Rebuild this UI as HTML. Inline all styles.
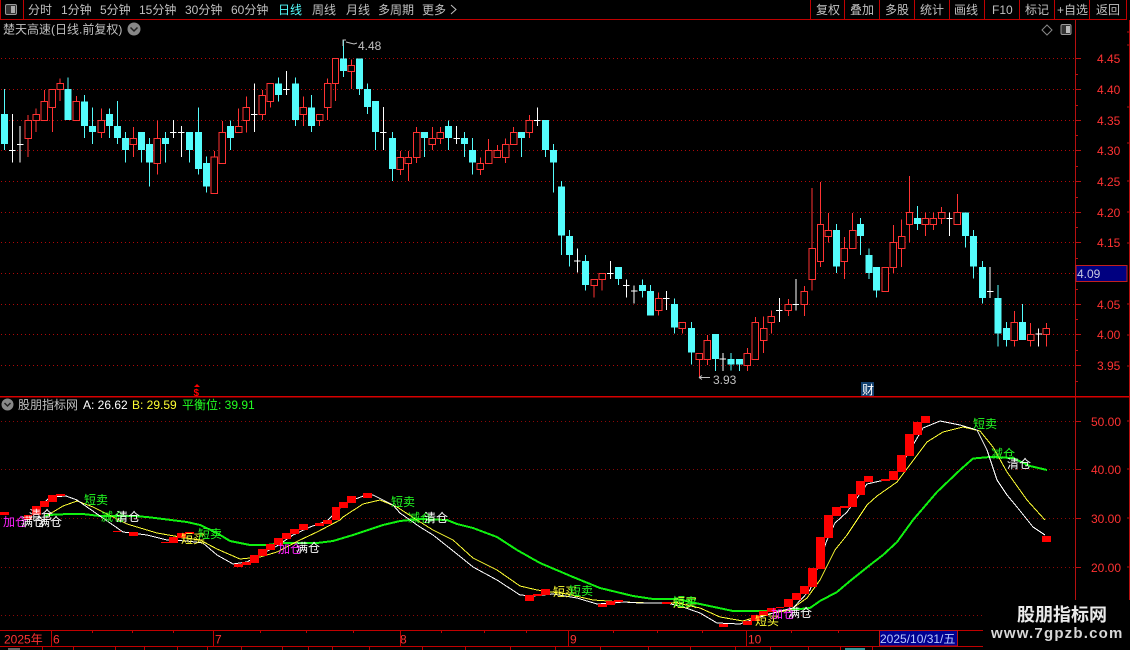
<!DOCTYPE html>
<html>
<head>
<meta charset="utf-8">
<style>
html,body{margin:0;padding:0;background:#000;width:1130px;height:650px;overflow:hidden}
svg{display:block;font-family:"Liberation Sans","WenQuanYi Zen Hei","Noto Sans CJK SC",sans-serif;font-size:12px}
.g{fill:#c0c0c0}
.r{fill:#ff3232}
.c{vector-effect:non-scaling-stroke}
.lg{fill:#22ff22}.lw{fill:#ffffff}.ly{fill:#ffff33}.lm{fill:#ff22ff}
</style>
</head>
<body>
<svg width="1130" height="650" viewBox="0 0 1130 650" xmlns="http://www.w3.org/2000/svg">
<rect width="1130" height="650" fill="#000"/>

<!-- grid -->
<path shape-rendering="crispEdges" stroke="#b00808" stroke-width="1" stroke-dasharray="1 3" fill="none" d="M1 58.5H1075M1 89.5H1075M1 120.5H1075M1 150.5H1075M1 181.5H1075M1 212.5H1075M1 242.5H1075M1 273.5H1075M1 304.5H1075M1 334.5H1075M1 365.5H1075"/>
<path shape-rendering="crispEdges" stroke="#8c0808" stroke-width="1" stroke-dasharray="1 3" fill="none" d="M1 421.5H1075M1 469.5H1075M1 518.5H1075M1 567.5H1075M1 615.5H1075"/>

<!-- toolbar -->
<path shape-rendering="crispEdges" stroke="#c00000" fill="none" d="M0 19.5H1127M23.5 0V19M.5 0V19M810.5 0V19M844.5 0V19M879.5 0V19M914.5 0V19M949.5 0V19M984.5 0V19M1019.5 0V19M1054.5 0V19M1089.5 0V19M1126.5 0V19"/>
<rect x="5.5" y="4.5" width="11" height="10" rx="1.5" fill="#333" stroke="#999"/>
<rect x="11" y="6" width="4" height="7" fill="#aaa"/>
<g class="g">
<text x="28" y="14">分时</text>
<text x="61" y="14">1分钟</text>
<text x="100" y="14">5分钟</text>
<text x="139" y="14">15分钟</text>
<text x="185" y="14">30分钟</text>
<text x="231" y="14">60分钟</text>
<text x="278" y="14" style="fill:#54fcfc">日线</text>
<text x="312" y="14">周线</text>
<text x="346" y="14">月线</text>
<text x="378" y="14">多周期</text>
<text x="422" y="14">更多</text>
<text x="816" y="14">复权</text>
<text x="850" y="14">叠加</text>
<text x="885" y="14">多股</text>
<text x="920" y="14">统计</text>
<text x="954" y="14">画线</text>
<text x="992" y="14">F10</text>
<text x="1025" y="14">标记</text>
<text x="1057" y="14">+自选</text>
<text x="1096" y="14">返回</text>
</g>
<path d="M451 5l5 4.5-5 4.5" fill="none" stroke="#c0c0c0"/>

<!-- price title -->
<text class="g" x="3" y="33.500">楚天高速(日线.前复权)</text>
<circle cx="134" cy="29" r="6.500" fill="#888"/>
<path d="M130.500 27.500l3.500 3.500 3.500-3.500" fill="none" stroke="#222" stroke-width="1.500"/>
<path d="M1047 25l5 5-5 5-5-5z" fill="none" stroke="#888"/>
<rect x="1061" y="24.500" width="10" height="10" rx="1.500" fill="#333" stroke="#999"/>
<rect x="1066" y="26" width="4" height="7" fill="#bbb"/>

<!-- candles part 1 -->
<g transform="scale(.36036,.33333)" shape-rendering="crispEdges">
<path class="c" fill="none" stroke="#54fcfc" stroke-width="1" d="M12 267V450M189 232V360M234 285V414M256 322V432M304 325V414M326 303V432M348 396V488M392 396V488M415 414V560M459 396V488M526 396V488M551 322V524M573 470V578M640 361V450M773 232V304M820 232V378M865 285V396M953 120V231M997 175V285M1020 250V342M1042 303V450M1089 396V543M1178 396V471M1244 361V450M1289 396V471M1311 414V524M1447 396V471M1514 360V471M1536 432V578M1558 543V765"/>
<path class="c" fill="none" stroke="#54fcfc" stroke-width="7" d="M12 342V432M189 267V360M234 304V378M256 378V396M304 342V378M326 378V414M348 414V450M392 396V450M415 432V488M459 414V432M526 396V450M551 396V507M573 489V560M640 378V414M773 250V285M820 250V360M865 322V378M953 175V213M997 175V267M1020 267V321M1042 303V396M1089 414V507M1178 396V414M1244 378V414M1289 414V432M1311 450V488M1447 396V414M1514 360V450M1536 450V488M1558 560V707"/>
<path class="c" fill="none" stroke="#ff3232" stroke-width="1" d="M78 345V471M100 325V396M123 270V361M145 268V396M167 235V303M212 288V361M281 325V414M370 381V471M437 361V524M595 453V580M617 363V490M662 325V397M684 289V397M728 270V360M750 250V322M842 289V378M887 343V378M909 235V360M931 175V303M975 178V267M1111 453V525M1133 453V543M1156 381V489M1200 381V450M1222 381V432M1333 472V525M1356 417V490M1380 435V472M1403 415V489M1425 381V433M1469 345V414"/>
<path class="c" fill="#000" stroke="#ff3232" stroke-width="1" d="M69 361h18V415h-18ZM91 343h18V361h-18ZM114 304h18V361h-18ZM136 268h18V322h-18ZM158 250h18V268h-18ZM203 304h18V361h-18ZM272 361h18V398h-18ZM361 415h18V433h-18ZM428 415h18V490h-18ZM586 471h18V580h-18ZM608 397h18V490h-18ZM653 379h18V397h-18ZM675 322h18V361h-18ZM719 286h18V343h-18ZM741 250h18V304h-18ZM833 322h18V343h-18ZM878 343h18V361h-18ZM900 250h18V322h-18ZM922 175h18V250h-18ZM966 196h18V214h-18ZM1102 472h18V508h-18ZM1124 472h18V490h-18ZM1147 397h18V472h-18ZM1191 415h18V433h-18ZM1213 397h18V415h-18ZM1324 490h18V508h-18ZM1347 452h18V490h-18ZM1371 452h18V472h-18ZM1394 433h18V472h-18ZM1416 397h18V433h-18ZM1460 361h18V397h-18Z"/>
<path class="c" fill="none" stroke="#fff" stroke-width="1" d="M34 342V488M25 451h18M56 378V488M47 433h18M481 360V414M472 397h18M503 378V471M494 397h18M706 250V396M697 343h18M795 213V285M786 268h18M1064 321V450M1055 397h18M1267 378V432M1258 415h18M1491 322V378M1482 361h18"/>
</g>

<!-- candles part 2 -->
<g transform="translate(565,170) scale(.36036,.33333)" shape-rendering="crispEdges">
<path class="c" fill="none" stroke="#54fcfc" stroke-width="1" d="M12 180V290M57 255V362M148 291V345M215 328V383M237 345V437M304 385V491M351 456V584M417 492V603M461 549V602M484 567V603M753 162V309M820 144V255M843 235V327M865 291V383M978 108V180M1111 127V233M1133 180V326M1158 273V401M1202 345V530M1225 456V530M1269 402V510"/>
<path class="c" fill="none" stroke="#54fcfc" stroke-width="7" d="M12 198V255M57 273V345M148 291V327M215 345V363M237 363V437M304 402V473M351 474V548M417 492V567M461 567V584M484 567V584M753 180V290M820 162V198M843 255V309M865 291V362M978 144V162M1111 127V198M1133 198V290M1158 291V384M1202 384V491M1225 474V510M1269 456V510"/>
<path class="c" fill="none" stroke="#ff3232" stroke-width="1" d="M81 328V383M103 310V362M260 367V437M326 457V491M373 550V622M395 495V585M506 534V603M528 441V568M551 440V549M573 422V491M620 387V438M664 348V438M686 54V362M709 36V291M731 129V217M775 201V327M798 129V236M889 292V365M911 165V309M934 148V291M956 18V217M1000 127V198M1022 127V180M1045 111V162M1089 72V164M1247 423V530M1292 459V530M1336 459V530"/>
<path class="c" fill="#000" stroke="#ff3232" stroke-width="1" d="M72 328h18V346h-18ZM94 310h18V328h-18ZM251 385h18V422h-18ZM317 457h18V475h-18ZM364 550h18V568h-18ZM386 511h18V568h-18ZM497 550h18V586h-18ZM519 457h18V568h-18ZM542 475h18V512h-18ZM564 439h18V458h-18ZM611 403h18V421h-18ZM655 364h18V403h-18ZM677 235h18V328h-18ZM700 163h18V274h-18ZM722 181h18V199h-18ZM766 235h18V274h-18ZM789 181h18V236h-18ZM880 292h18V365h-18ZM902 217h18V292h-18ZM925 199h18V236h-18ZM947 127h18V163h-18ZM991 146h18V163h-18ZM1013 146h18V163h-18ZM1036 127h18V146h-18ZM1080 127h18V164h-18ZM1238 457h18V512h-18ZM1283 493h18V512h-18ZM1327 475h18V493h-18Z"/>
<path class="c" fill="none" stroke="#fff" stroke-width="1" d="M34 235V308M25 273h18M126 273V327M117 310h18M170 328V383M161 346h18M192 346V401M183 363h18M281 363V420M272 385h18M438 549V603M429 567h18M595 384V456M586 421h18M641 327V421M632 403h18M1067 127V198M1058 145h18M1180 291V384M1171 365h18M1314 475V530M1305 492h18"/>
</g>

<!-- high / low markers -->
<path d="M343 46V40h3M346 42l8 2 3-1" fill="none" stroke="#c0c0c0"/>
<text class="g" x="358" y="50">4.48</text>
<path d="M699 377.500h11M699 377.500l3-2M699 377.500l3 2" fill="none" stroke="#c0c0c0"/>
<text class="g" x="713" y="384">3.93</text>

<!-- axis -->
<path shape-rendering="crispEdges" stroke="#b81010" fill="none" d="M1075.500 20V600M1075 58.500h6M1075 89.500h6M1075 120.500h6M1075 150.500h6M1075 181.500h6M1075 212.500h6M1075 242.500h6M1075 304.500h6M1075 334.500h6M1075 365.500h6M1075 74.500h3M1075 105.500h3M1075 135.500h3M1075 166.500h3M1075 197.500h3M1075 227.500h3M1075 258.500h3M1075 289.500h3M1075 319.500h3M1075 350.500h3M1075 381.500h3M1075 421.500h6M1075 469.500h6M1075 518.500h6M1075 567.500h6M1129.500 20V650M1127 32h3M1127 45h3M1127 107h3M1127 143h3M1127 181h3M1127 212h3M1127 243h3M1127 304h3M1127 335h3M1127 366h3M1127 421h3M1127 469h3M1127 518h3M1127 567h3"/>
<g class="r">
<text x="1097" y="63">4.45</text>
<text x="1097" y="94">4.40</text>
<text x="1097" y="125">4.35</text>
<text x="1097" y="155">4.30</text>
<text x="1097" y="186">4.25</text>
<text x="1097" y="217">4.20</text>
<text x="1097" y="247">4.15</text>
<text x="1097" y="309">4.05</text>
<text x="1097" y="339">4.00</text>
<text x="1097" y="370">3.95</text>
<text x="1091" y="426">50.00</text>
<text x="1091" y="474">40.00</text>
<text x="1091" y="523">30.00</text>
<text x="1091" y="572">20.00</text>
</g>
<rect x="1076" y="265.500" width="51" height="16" fill="#000080" stroke="#c02020" shape-rendering="crispEdges"/>
<text x="1077" y="278" fill="#c8c8e0">4.09</text>

<!-- $ and 财 -->
<path d="M197 384l3 3h-6z" fill="#f00"/>
<text x="193.500" y="396" fill="#f00" style="font-size:10px;font-weight:bold">$</text>
<rect x="861" y="382" width="13" height="14" fill="#12406e"/>
<text x="862" y="394" fill="#fff">财</text>

<!-- divider -->
<rect x="0" y="396" width="1130" height="1.500" fill="#d80000"/>

<!-- indicator title -->
<circle cx="7.500" cy="404.500" r="6" fill="#888"/>
<path d="M4.500 403l3 3 3-3" fill="none" stroke="#222" stroke-width="1.500"/>
<text class="g" x="18" y="409">股朋指标网</text>
<text x="83" y="409" fill="#fff">A: 26.62</text>
<text x="132" y="409" fill="#ffff33">B: 29.59</text>
<text x="182" y="409" fill="#22ff22">平衡位: 39.91</text>

<!-- indicator lines -->
<path fill="none" stroke="#10f010" stroke-width="2" shape-rendering="crispEdges" d="M45 516L48 515L68 514L83 514L100 516L133 516L147 517L163 519L187 522L200 525L217 533L230 541L250 545L267 545L283 543L317 543L333 541L353 535L383 525L400 521L420 519L447 520L457 524L473 528L497 537L517 550L540 563L573 577L600 588L633 596L653 599L677 599L700 604L733 611L763 611L780 611L810 608L820 601L837 592L850 581L870 565L883 555L897 542L913 520L937 492L960 470L973 458.500L990 457L1013 458L1030 466L1047 470"/>
<path fill="none" stroke="#ffff33" stroke-width="1" shape-rendering="crispEdges" d="M48 515L63 506L77 501L93 507L103 512L127 524L157 533L180 537L200 540L217 549L240 559L260 557L277 552L300 540L317 532L340 520L343 517L363 504L380 500L397 507L417 520L433 530L453 540L473 558L497 570L520 586L537 590L567 594L593 600L623 602L650 603L677 603L700 608L720 617L743 621L763 615L790 610L807 598L820 580L835 550L847 535L867 505L877 496L897 482L912 462L927 442L943 432L963 427L980 431L993 447L1007 472L1027 500L1045 520"/>
<path fill="none" stroke="#ffffff" stroke-width="1" shape-rendering="crispEdges" d="M40 507L50 497L66 496L77 500L87 507L100 516L123 532L147 535L167 540L187 541L203 543L217 555L233 564L247 562L260 555L277 546L293 535L310 527L327 521L345 503L366 495L373 495L393 505L400 513L420 527L433 535L457 554L473 567L497 580L520 595L533 596L553 594L577 598L597 604L613 603L623 602L640 603L667 603L683 607L700 613L717 623L740 624L757 618L780 611L793 608L810 590L827 540L835 523L847 512L867 484L880 481L893 479L913 445L923 428L940 421L960 425L977 430L987 450L997 480L1007 495L1017 507L1033 527L1045 535"/>

<!-- red blocks -->
<path fill="#ff0000" shape-rendering="crispEdges" d="M0 512h9v3H0ZM24 515h8v5h-8ZM32 506h9v9h-9ZM40 501h9v6h-9ZM48 495h9v7h-9ZM56 494h9v2h-9ZM113 531h8v1h-8ZM129 532h9v4h-9ZM161 542h8v1h-8ZM169 537h9v6h-9ZM177 533h9v5h-9ZM185 532h9v2h-9ZM234 564h9v3h-9ZM242 562h9v3h-9ZM250 555h9v8h-9ZM258 549h9v7h-9ZM266 544h9v6h-9ZM274 538h9v7h-9ZM282 533h9v6h-9ZM290 529h9v5h-9ZM299 524h9v6h-9ZM315 523h9v3h-9ZM323 520h9v4h-9ZM332 507h8v13h-8ZM339 502h9v6h-9ZM347 496h9v7h-9ZM363 493h9v5h-9ZM525 595h9v6h-9ZM533 594h9v2h-9ZM541 589h9v6h-9ZM598 604h9v3h-9ZM606 601h9v4h-9ZM614 600h9v2h-9ZM662 602h9v2h-9ZM719 624h9v3h-9ZM743 621h9v4h-9ZM751 615h9v6h-9ZM759 611h9v5h-9ZM767 608h9v4h-9ZM776 607h8v1h-8ZM784 599h9v8h-9ZM792 593h9v7h-9ZM800 586h9v8h-9ZM808 568h9v19h-9ZM816 537h9v32h-9ZM824 515h9v23h-9ZM832 507h9v9h-9ZM840 506h9v2h-9ZM848 494h9v13h-9ZM856 481h9v14h-9ZM864 476h9v6h-9ZM881 479h9v2h-9ZM889 471h9v9h-9ZM897 455h9v17h-9ZM905 434h9v22h-9ZM913 422h9v13h-9ZM921 416h9v7h-9ZM1042 536h9v6h-9Z"/>

<!-- signal labels -->
<g>
<text class="lm" x="3" y="526">加仓</text>
<text class="lw" x="21" y="526">满仓</text>
<text class="lw" x="38" y="526">满仓</text>
<text class="lw" x="29" y="519">清仓</text>
<text class="lg" x="84" y="504">短卖</text>
<text class="lg" x="101" y="521">减仓</text>
<text class="lw" x="116" y="521">清仓</text>
<text class="ly" x="181" y="543">短买</text>
<text class="lg" x="198" y="538">短卖</text>
<text class="lm" x="278" y="553">加仓</text>
<text class="lw" x="296" y="552">满仓</text>
<text class="lg" x="391" y="506">短卖</text>
<text class="lg" x="408" y="522">减仓</text>
<text class="lw" x="424" y="522">清仓</text>
<text class="ly" x="553" y="596">短买</text>
<text class="lg" x="569" y="595">短卖</text>
<text class="ly" x="673" y="607">短买</text>
<text class="lg" x="673" y="606">短卖</text>
<text class="ly" x="755" y="625">短买</text>
<text class="lm" x="771" y="618">加仓</text>
<text class="lw" x="788" y="617">满仓</text>
<text class="lg" x="973" y="428">短卖</text>
<text class="lg" x="991" y="458">减仓</text>
<text class="lw" x="1007" y="468">清仓</text>
</g>

<!-- date axis -->
<path shape-rendering="crispEdges" stroke="#c00000" fill="none" d="M0 630.500H983M0 646.500H983M51.500 630V646M213.500 630V646M400.500 630V646M568.500 630V646M746.500 630V646M92.500 630v3M132.500 630v3M173.500 630v3M260.500 630v3M306.500 630v3M353.500 630v3M441.500 630v3M484.500 630v3M526.500 630v3M613.500 630v3M657.500 630v3M702.500 630v3M791.500 630v3M838.500 630v3M42.500 646v4M73.500 646v4M115.500 646v4M144.500 646v4M177.500 646v4M207.500 646v4M241.500 646v4M282.500 646v4M308.500 646v4M332.500 646v4M369.500 646v4M422.500 646v4M465.500 646v4M510.500 646v4M555.500 646v4M600.500 646v4M648.500 646v4M690.500 646v4M735.500 646v4M770.500 646v4M808.500 646v4M840.500 646v4M872.500 646v4"/>
<g class="r">
<text x="4" y="643.500">2025年</text>
<text x="53" y="643.500">6</text>
<text x="215" y="643.500">7</text>
<text x="400" y="643.500">8</text>
<text x="570" y="643.500">9</text>
<text x="748" y="643.500">10</text>
</g>
<rect x="879.500" y="630.500" width="78" height="15.500" fill="#000090" stroke="#c01010" shape-rendering="crispEdges"/>
<text x="880" y="643" fill="#b8c8ff">2025/10/31/五</text>
<rect x="845" y="648" width="20" height="2" fill="#54fcfc" opacity=".6"/>
<rect x="8" y="648" width="12" height="2" fill="#aaa" opacity=".6"/>

<!-- watermark -->
<rect x="984" y="600" width="146" height="50" fill="#000"/>
<text x="1017" y="621" fill="#eaeaea" style="font-size:18px;font-weight:bold">股朋指标网</text>
<text x="991" y="638" fill="#d8d8d8" style="font-size:15px;font-weight:bold;letter-spacing:1.200px">www.7gpzb.com</text>
<path shape-rendering="crispEdges" stroke="#b81010" d="M1075.500 590V600M1127 567h3"/>
</svg>
</body>
</html>
